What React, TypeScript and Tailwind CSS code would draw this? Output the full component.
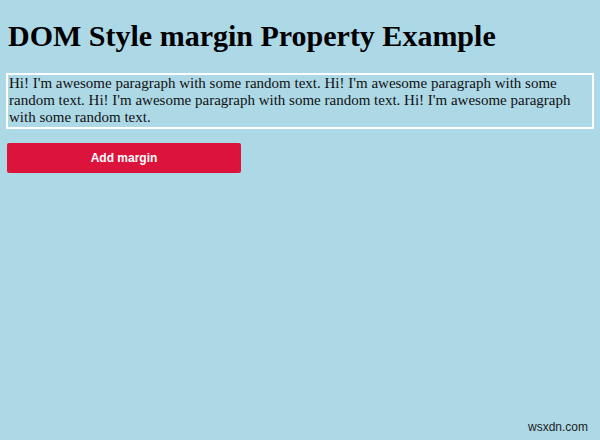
export default function App() {
  return (
    <div className="relative h-[440px] w-[600px] overflow-hidden bg-[#add8e6] font-['Liberation_Serif',serif] text-black">
      <h1 className="ml-2 mt-[18px] text-[30px] font-bold leading-[35px]">
        DOM Style margin Property Example
      </h1>
      <p className="ml-[6px] mt-[20px] w-[588px] border-2 border-white pb-[1px] pl-[1px] text-[15px] leading-[17px] text-[#111]">
        Hi! I'm awesome paragraph with some random text. Hi! I'm awesome paragraph with some
        random text. Hi! I'm awesome paragraph with some random text. Hi! I'm awesome paragraph
        with some random text.
      </p>
      <button className="ml-[7px] mt-[14px] h-[30px] w-[234px] rounded-[2px] bg-[#dc143c] font-['Liberation_Sans',sans-serif] text-[12px] font-bold text-white">
        Add margin
      </button>
      <div className="absolute bottom-[4px] right-[12px] font-['Liberation_Sans',sans-serif] text-[12px] text-[#222]">
        wsxdn.com
      </div>
    </div>
  );
}
